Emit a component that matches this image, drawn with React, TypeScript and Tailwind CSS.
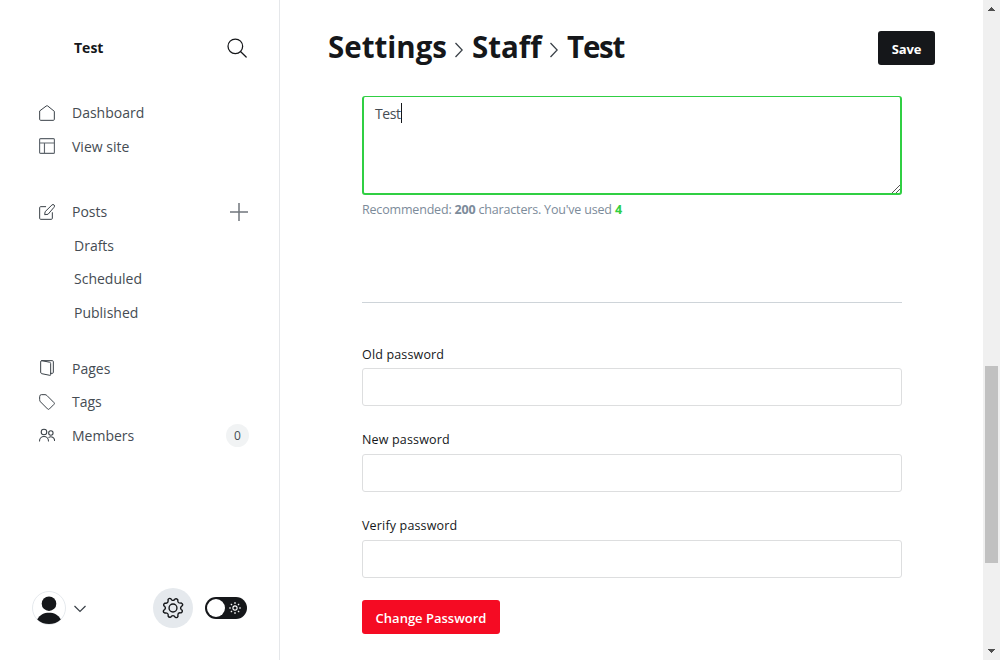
import type { ReactNode } from "react";

function Icon({ children, className = "size-4" }: { children: ReactNode; className?: string }) {
  return (
    <svg
      viewBox="0 0 24 24"
      fill="none"
      stroke="currentColor"
      strokeWidth="1.5"
      strokeLinecap="round"
      strokeLinejoin="round"
      className={`block shrink-0 ${className}`}
    >
      {children}
    </svg>
  );
}

const home = <path d="M1 9.5v12A1.5 1.5 0 0 0 2.500 23h19a1.500 1.500 0 0 0 1.500-1.500v-12L13 1.400a1.600 1.600 0 0 0-2 0z" />;
const layout = (
  <g stroke="#5f666d" strokeWidth="1.700">
    <rect x="0.900" y="0.900" width="22.200" height="22.200" rx="1.500" />
    <path d="M.8 7.500h22.400M8.200 7.500v15.700" />
  </g>
);
const pencil = (
  <>
    <path d="M20 13v8.500a1.500 1.500 0 0 1-1.500 1.500h-16A1.500 1.500 0 0 1 1 21.500v-16A1.500 1.500 0 0 1 2.500 4H10" />
    <path d="M13 15.500 8.500 16l.7-4.500L19.400 1.500a2.300 2.300 0 0 1 3.300 3.300z" />
  </>
);
const pages = (
  <>
    <path d="M4 1h16a1.500 1.500 0 0 1 1.500 1.500v16A1.500 1.500 0 0 1 20 20h-2.500" />
    <path d="M2.500 2.500A1.500 1.500 0 0 1 4.200 1l11.500 2.300a2 2 0 0 1 1.800 2V22a1 1 0 0 1-1.200 1L4 20.500A2 2 0 0 1 2.500 18.600z" />
  </>
);
const tag = <path d="M1 3.500A2.500 2.500 0 0 1 3.500 1H9a4 4 0 0 1 2.800 1.200l10.600 10.600a2 2 0 0 1 0 2.800l-6.800 6.800a2 2 0 0 1-2.800 0L2.200 11.700A4 4 0 0 1 1 9z" />;
const members = (
  <g strokeWidth="1.600">
    <circle cx="7.500" cy="7.500" r="4.200" />
    <circle cx="17.800" cy="9" r="3.300" />
    <path d="M.8 21a6.700 6.700 0 0 1 13.400 0M14.800 15.500a5.500 5.500 0 0 1 8.500 4.800" />
  </g>
);

function Row({ icon, label, end }: { icon: ReactNode; label: string; end?: ReactNode }) {
  return (
    <div className="flex h-[33.500px] items-center pl-[39px] pr-[30px]">
      <Icon className="size-4 text-[#394047]">{icon}</Icon>
      <span className="ml-[17px] flex-1">{label}</span>
      {end}
    </div>
  );
}

function SubRow({ label }: { label: string }) {
  return <div className="flex h-[33.500px] items-center pl-[74px]">{label}</div>;
}

function Sidebar() {
  return (
    <aside className="flex h-full w-[280px] shrink-0 flex-col border-r border-[#e5e7ea] text-[14px] text-[#454c53]">
      <div className="flex h-24 items-center justify-between pl-[74px] pr-8">
        <span className="pb-0.5 text-[14px] font-bold text-[#15171a]">Test</span>
        <Icon className="size-5 text-[#15171a]">
          <circle cx="10" cy="10" r="8.800" />
          <path d="m16.500 16.500 6.500 6.300" />
        </Icon>
      </div>
      <nav>
        <Row icon={home} label="Dashboard" />
        <Row icon={layout} label="View site" />
        <div className="mt-8">
          <Row
            icon={pencil}
            label="Posts"
            end={
              <svg viewBox="0 0 18 18" className="mr-px block size-[18px]" stroke="#70767c" strokeWidth="1.500">
                <path d="M9 0v18M0 9h18" />
              </svg>
            }
          />
          <SubRow label="Drafts" />
          <SubRow label="Scheduled" />
          <SubRow label="Published" />
        </div>
        <div className="mt-[22.500px]">
          <Row icon={pages} label="Pages" />
          <Row icon={tag} label="Tags" />
          <Row
            icon={members}
            label="Members"
            end={
              <span className="flex size-[23px] items-center justify-center rounded-full bg-[#f1f3f4] pt-0.5 text-[12px] font-medium">
                0
              </span>
            }
          />
        </div>
      </nav>
      <div className="mb-8 mt-auto flex h-10 items-center pl-8">
        <svg viewBox="0 0 34 34" className="block size-[34px]">
          <circle cx="17" cy="17" r="16.500" fill="#fff" stroke="#e5e9ed" />
          <circle cx="17" cy="12.700" r="7.300" fill="#15171a" />
          <path d="M5.200 28.400C8 23.500 12 21.700 17 21.700s9 1.800 11.800 6.700C25.500 31.700 21.500 33 17 33s-8.500-1.300-11.800-4.600z" fill="#15171a" />
        </svg>
        <svg viewBox="0 0 12 8" className="ml-2 mt-px block h-2 w-3" fill="none" stroke="#394047" strokeWidth="1.200">
          <path d="m.5 1 5.500 5.500L11.500 1" />
        </svg>
        <div className="ml-[67px] flex size-10 items-center justify-center rounded-full bg-[#e5e9ed] text-[#15171a]">
          <Icon className="size-[22px]">
            <circle cx="12" cy="12" r="4.300" />
            <path
              transform="rotate(22.5 12 12)"
              d="M10 3.200 10.500 1.800Q12 .5 13.500 1.800L14 3.200Q15 5 17 4.200L18.400 3.500Q20.500 3.500 20.500 5.600L19.800 7Q19 9 20.800 10L22.200 10.500Q23.500 12 22.200 13.500L20.800 14Q19 15 19.800 17L20.500 18.400Q20.500 20.500 18.400 20.500L17 19.800Q15 19 14 20.800L13.500 22.200Q12 23.500 10.500 22.200L10 20.800Q9 19 7 19.800L5.600 20.500Q3.500 20.500 3.500 18.400L4.200 17Q5 15 3.200 14L1.800 13.500Q.5 12 1.800 10.500L3.200 10Q5 9 4.200 7L3.500 5.600Q3.500 3.500 5.600 3.500L7 4.200Q9 5 10 3.200Z"
            />
          </Icon>
        </div>
        <div className="ml-3 flex h-[22px] w-[42px] items-center justify-between rounded-full bg-[#15171a] pl-[2px] pr-[6px] text-white">
          <span className="size-[18px] rounded-full bg-white" />
          <svg viewBox="0 0 12 12" className="block size-3" fill="none" stroke="currentColor" strokeWidth="1.100">
            <circle cx="6" cy="6" r="2.100" />
            <path d="M6 0v2M6 10v2M0 6h2M10 6h2M1.800 1.800l1.300 1.300M8.900 8.900l1.300 1.300M10.200 1.800 8.900 3.100M3.100 8.900l-1.300 1.300" />
          </svg>
        </div>
      </div>
    </aside>
  );
}

function Chevron() {
  return (
    <svg viewBox="0 0 8 16" className="mt-1.5 block h-4 w-2 shrink-0" fill="none" stroke="#394047" strokeWidth="1.300">
      <path d="m.5 1 6.700 7-6.700 7" />
    </svg>
  );
}

function Field({ label, className = "", labelClass = "" }: { label: string; className?: string; labelClass?: string }) {
  return (
    <label className={`block ${className}`}>
      <span className={`block h-5 text-[12.500px] font-medium leading-5 tracking-[0.160px] text-[#15171a] ${labelClass}`}>{label}</span>
      <input type="password" className="mt-1 block h-[38px] w-full rounded-[3px] border border-[#dddedf] bg-white px-3" />
    </label>
  );
}

function Scrollbar() {
  return (
    <div className="flex h-full w-[17px] shrink-0 flex-col items-center bg-[#f0f0f0]">
      <svg viewBox="0 0 17 17" className="block size-[17px]" fill="#505050" shapeRendering="crispEdges">
        <path d="M5 11h7L9 7H8z" />
      </svg>
      <div className="mt-[349px] h-[197px] w-[13px] shrink-0 bg-[#c1c1c1]" />
      <svg viewBox="0 0 17 17" className="mt-auto block size-[17px]" fill="#505050" shapeRendering="crispEdges">
        <path d="M5 6h7l-3 4H8z" />
      </svg>
    </div>
  );
}

export default function App() {
  return (
    <div className="flex h-[660px] w-[1000px] overflow-hidden bg-white font-['Open_Sans','Noto_Sans',sans-serif]">
      <Sidebar />
      <main className="flex min-w-0 flex-1 flex-col">
        <header className="flex h-24 items-center justify-between pl-12 pr-12">
          <h1 className="flex items-center pb-[3px] text-[29.500px] font-bold leading-10 text-[#15171a]">
            <span className="w-[127px] whitespace-nowrap">Settings</span>
            <Chevron />
            <span className="ml-[9px] w-[78px] whitespace-nowrap">Staff</span>
            <Chevron />
            <span className="ml-[9px] whitespace-nowrap tracking-[-1.200px]">Test</span>
          </h1>
          <button className="h-[34px] w-[57px] rounded-[3px] bg-[#15171a] pt-[3px] text-[13px] font-bold tracking-[-0.200px] text-white">
            Save
          </button>
        </header>
        <div className="ml-[82px] flex w-[540px] flex-col">
          <div className="relative flex h-[99px] rounded-[3px] border-2 border-t border-[#30cf43] pl-[11px] pt-1.5">
            <span className="h-5 border-r border-[#15171a] text-[14px] leading-[22px] tracking-[-0.400px] text-[#454c53]">Test</span>
            <svg viewBox="0 0 9 9" className="absolute bottom-0 right-0 block size-[9px]" stroke="#555" strokeWidth="1">
              <path d="M1 9 9 1M5 9l4-4" />
            </svg>
          </div>
          <p className="mt-[5px] h-5 whitespace-nowrap text-[12.500px] leading-5 tracking-[-0.180px] text-[#7c8b9a]">
            Recommended: <b>200</b> characters. You've used <b className="text-[#30cf43]">4</b>
          </p>
          <hr className="mt-[82px] border-[#ced4d9]" />
          <Field label="Old password" className="mt-[41px]" labelClass="pt-px" />
          <Field label="New password" className="mt-6" />
          <Field label="Verify password" className="mt-6" />
          <button className="mt-[22px] h-[34px] w-[138px] whitespace-nowrap rounded-[3px] bg-[#f50b23] pt-[3px] text-[13px] font-semibold text-white">
            Change Password
          </button>
        </div>
      </main>
      <Scrollbar />
    </div>
  );
}
